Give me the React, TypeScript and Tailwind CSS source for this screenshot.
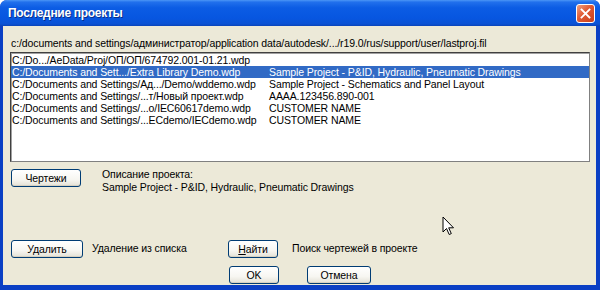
const rows = [
  { path: "C:/Do.../AeData/Proj/ОП/ОП/674792.001-01.21.wdp", desc: "" },
  { path: "C:/Documents and Sett.../Extra Library Demo.wdp", desc: "Sample Project - P&ID, Hydraulic, Pneumatic Drawings" },
  { path: "C:/Documents and Settings/Ад.../Demo/wddemo.wdp", desc: "Sample Project - Schematics and Panel Layout" },
  { path: "C:/Documents and Settings/...т/Новый проект.wdp", desc: "AAAA.123456.890-001" },
  { path: "C:/Documents and Settings/...o/IEC60617demo.wdp", desc: "CUSTOMER NAME" },
  { path: "C:/Documents and Settings/...ECdemo/IECdemo.wdp", desc: "CUSTOMER NAME" },
];

function XpButton({ children, w }: { children: React.ReactNode; w: string }) {
  return (
    <button
      className={`${w} h-[18px] shrink-0 rounded-[3px] border border-[#003c74] bg-[linear-gradient(180deg,#ffffff_0%,#f7f6f1_60%,#e3e1d6_100%)] text-[10.5px] leading-none tracking-[-0.1px] text-black shadow-[inset_0_-1px_0_#d6d0c0]`}
    >
      {children}
    </button>
  );
}

function Cursor() {
  return (
    <svg width="13" height="20" viewBox="0 0 13 20" className="absolute left-[442px] top-[216px]">
      <path
        d="M1 1 L1 16 L4.5 12.5 L7.2 18.5 L9.3 17.6 L6.7 11.8 L11.5 11.8 Z"
        fill="#fff"
        stroke="#000"
        strokeWidth="1"
        strokeLinejoin="miter"
      />
    </svg>
  );
}

export default function App() {
  return (
    <div className="relative w-[600px] h-[290px] overflow-hidden rounded-t-[7px] bg-[#0a3fc4] font-['Liberation_Sans',Arial,sans-serif] text-black">
      {/* title bar */}
      <div className="flex h-[26px] items-center justify-between bg-[linear-gradient(180deg,#4c96f6_0%,#2170ec_8%,#0c5ce4_30%,#0756e0_70%,#0a52d4_92%,#0a43b8_100%)] pl-[8px] pr-[5px]">
        <span className="text-[12px] font-bold tracking-[-0.3px] text-white [text-shadow:1px_1px_0_#0a2e8a]">Последние проекты</span>
        <div className="flex h-[19px] w-[19px] items-center justify-center rounded-[3px] border border-white bg-[linear-gradient(135deg,#f0a080_0%,#e05a34_45%,#c8401c_100%)]">
          <svg width="11" height="11" viewBox="0 0 11 11">
            <path d="M1.5 1.5 L9.5 9.5 M9.5 1.5 L1.5 9.5" stroke="#fff" strokeWidth="1.8" strokeLinecap="square" />
          </svg>
        </div>
      </div>

      {/* body */}
      <div className="ml-[3px] mr-[4px] flex h-[259px] flex-col whitespace-nowrap bg-[#ece9d8] pl-[7px] pr-[6px] pt-[11px] text-[10.5px] tracking-[-0.1px]">
        <div className="h-[13px] pl-[1px] leading-[13px]">
          c:/documents and settings/администратор/application data/autodesk/.../r19.0/rus/support/user/lastproj.fil
        </div>

        <div className="mt-[2px] h-[110px] overflow-hidden border border-t-[#404040] border-l-[#404040] border-r-[#808080] border-b-[#808080] bg-white pt-[1px] shadow-[inset_1px_1px_0_#a0a0a0]">
          {rows.map((r, i) => (
            <div
              key={i}
              className={`flex h-[12px] items-center leading-[12px] ${i === 1 ? "bg-[#316ac5] text-white" : ""}`}
            >
              <span className="w-[258px] shrink-0 overflow-hidden pl-[1px]">{r.path}</span>
              <span>{r.desc}</span>
            </div>
          ))}
        </div>

        <div className="mt-[6px] flex items-start">
          <div className="ml-[1px] mt-[1px]">
            <XpButton w="w-[70px]">Чертежи</XpButton>
          </div>
          <div className="ml-[21px] leading-[13px]">
            <div>Описание проекта:</div>
            <div>Sample Project - P&amp;ID, Hydraulic, Pneumatic Drawings</div>
          </div>
        </div>

        <div className="mt-[46px] flex items-center">
          <div className="ml-[1px] flex w-[217px] items-center">
            <XpButton w="w-[72px]">Удалить</XpButton>
            <span className="ml-[9px]">Удаление из списка</span>
          </div>
          <XpButton w="w-[50px]">
            <span className="underline underline-offset-1">Н</span>айти
          </XpButton>
          <span className="ml-[14px]">Поиск чертежей в проекте</span>
        </div>

        <div className="mt-[8px] flex items-center gap-[28px] pl-[219px]">
          <XpButton w="w-[50px]">OK</XpButton>
          <XpButton w="w-[64px]">Отмена</XpButton>
        </div>
      </div>

      <Cursor />
    </div>
  );
}
